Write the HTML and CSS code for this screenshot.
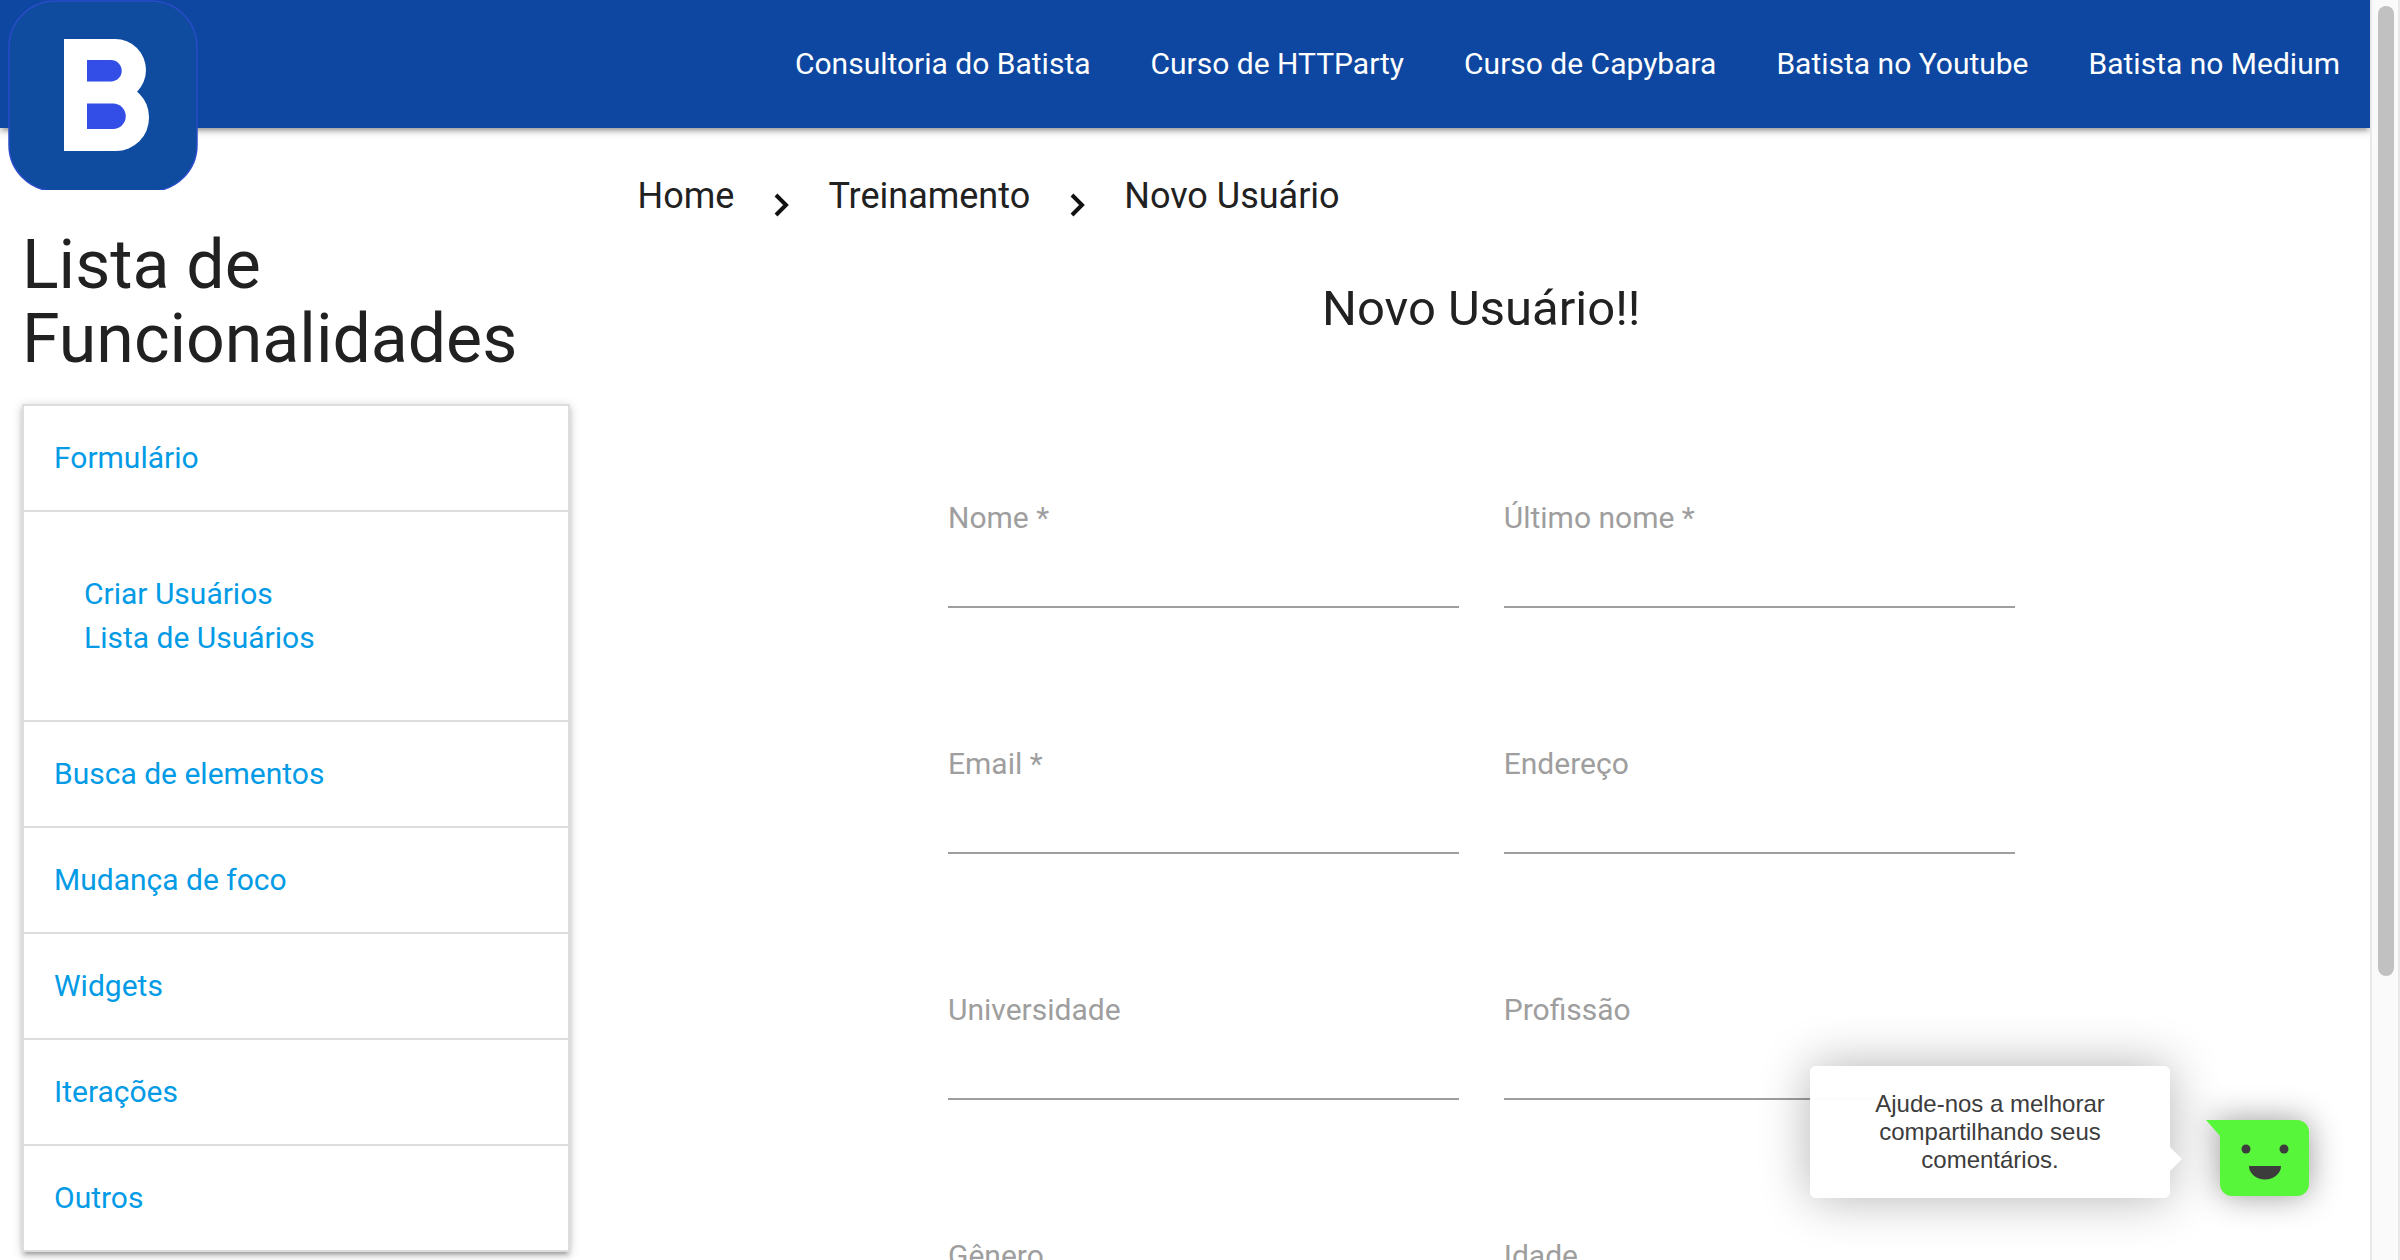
FILE: index.html
```html
<!DOCTYPE html>
<html lang="pt-BR">
<head>
<meta charset="utf-8">
<title>Novo Usuário</title>
<link rel="stylesheet" href="styles.css">
</head>
<body>
<div class="page">
  <header class="navbar">
    <a class="logo" href="#" aria-label="Página inicial">
      <svg viewBox="0 0 190 190">
        <rect x="1" y="1" width="188" height="190" rx="46" fill="#0f4ca0" stroke="#2a4cc8" stroke-width="1.5"/>
        <g fill="#fff">
          <rect x="56" y="39" width="46" height="112"/>
          <rect x="70" y="39" width="68" height="62" rx="31"/>
          <rect x="70" y="84" width="71" height="67" rx="33"/>
        </g>
        <g fill="#324ee6">
          <path d="M79 60h24a10.700 10.700 0 0 1 0 21.500h-24z"/>
          <path d="M79 103.500h26a12.700 12.700 0 0 1 0 25.500h-26z"/>
        </g>
      </svg>
    </a>
    <nav class="nav-links">
      <a href="#">Consultoria do Batista</a>
      <a href="#">Curso de HTTParty</a>
      <a href="#">Curso de Capybara</a>
      <a href="#">Batista no Youtube</a>
      <a href="#">Batista no Medium</a>
    </nav>
  </header>

  <div class="columns">
    <aside class="sidebar">
      <h1>Lista de Funcionalidades</h1>
      <ul class="menu">
        <li>
          <a class="menu-header" href="#">Formulário</a>
          <div class="menu-body">
            <a href="#">Criar Usuários</a>
            <a href="#">Lista de Usuários</a>
          </div>
        </li>
        <li><a class="menu-header" href="#">Busca de elementos</a></li>
        <li><a class="menu-header" href="#">Mudança de foco</a></li>
        <li><a class="menu-header" href="#">Widgets</a></li>
        <li><a class="menu-header" href="#">Iterações</a></li>
        <li><a class="menu-header" href="#">Outros</a></li>
      </ul>
    </aside>

    <main class="content">
      <nav class="breadcrumbs">
        <a href="#">Home</a>
        <svg class="chevron" viewBox="0 0 16 24"><path d="M3 2l10 10-10 10" fill="none" stroke="#111" stroke-width="4"/></svg>
        <a href="#">Treinamento</a>
        <svg class="chevron" viewBox="0 0 16 24"><path d="M3 2l10 10-10 10" fill="none" stroke="#111" stroke-width="4"/></svg>
        <a href="#">Novo Usuário</a>
      </nav>
      <h2>Novo Usuário!!</h2>
      <form class="user-form">
        <div class="field"><label for="nome">Nome *</label><input id="nome" type="text"></div>
        <div class="field"><label for="ultimo">Último nome *</label><input id="ultimo" type="text"></div>
        <div class="field"><label for="email">Email *</label><input id="email" type="email"></div>
        <div class="field"><label for="endereco">Endereço</label><input id="endereco" type="text"></div>
        <div class="field"><label for="universidade">Universidade</label><input id="universidade" type="text"></div>
        <div class="field"><label for="profissao">Profissão</label><input id="profissao" type="text"></div>
        <div class="field"><label for="genero">Gênero</label><input id="genero" type="text"></div>
        <div class="field"><label for="idade">Idade</label><input id="idade" type="text"></div>
      </form>
    </main>
  </div>

  <div class="feedback">
    <p class="feedback-text">Ajude-nos a melhorar compartilhando seus comentários.</p>
    <button class="feedback-button" type="button" aria-label="Enviar comentários">
      <svg viewBox="0 0 103 76">
        <path d="M0 0H91a12 12 0 0 1 12 12V64a12 12 0 0 1-12 12H26a12 12 0 0 1-12-12V16z" fill="#58f63a"/>
        <g fill="#3c3c3c">
          <circle cx="40" cy="29" r="4.500"/>
          <circle cx="78" cy="29" r="4.500"/>
          <path d="M43 46H75a16 13.500 0 0 1-32 0z"/>
        </g>
      </svg>
    </button>
  </div>
</div>
<div class="scrollbar"><div class="scroll-thumb"></div></div>
</body>
</html>
```
FILE: styles.css
```css
* {
  box-sizing: border-box;
}

body {
  margin: 0;
  height: 100vh;
  display: grid;
  grid-template-columns: minmax(0, 1fr) 30px;
  overflow: hidden;
  background: #fff;
  color: #212121;
  font: 30px/44px Roboto, sans-serif;
}

a {
  color: inherit;
  text-decoration: none;
}

.page {
  position: relative;
  height: 100vh;
  overflow: hidden;
}

.navbar {
  position: relative;
  display: flex;
  justify-content: space-between;
  height: 128px;
  padding: 0 30px 0 8px;
  background: #0d47a1;
  color: #fff;
  box-shadow: 0 4px 4px rgba(0, 0, 0, .14), 0 6px 2px -4px rgba(0, 0, 0, .12), 0 2px 10px rgba(0, 0, 0, .2);
}

.logo,
.logo svg {
  display: block;
  width: 190px;
  height: 190px;
}

.nav-links {
  display: flex;
  gap: 60px;
  line-height: 128px;
}

.columns {
  display: grid;
  grid-template-columns: 1fr 3fr;
}

.sidebar {
  padding: 100px 23px 0 22px;
}

h1,
h2 {
  margin: 0;
  font-weight: 400;
}

h1 {
  font-size: 68px;
  line-height: 74px;
}

.menu {
  list-style: none;
  margin: 28px 0 0;
  padding: 0;
  border: 2px solid #ddd;
  border-bottom: 0;
  color: #039be5;
  box-shadow: 0 4px 4px rgba(0, 0, 0, .14), 0 6px 2px -4px rgba(0, 0, 0, .12), 0 2px 10px rgba(0, 0, 0, .2);
}

.menu-header {
  display: block;
  padding: 30px;
  border-bottom: 2px solid #ddd;
}

.menu-body {
  display: flex;
  flex-direction: column;
  padding: 60px;
  border-bottom: 2px solid #ddd;
}

.breadcrumbs {
  display: flex;
  align-items: center;
  gap: 39px;
  padding: 46px 45px 0;
  font-size: 36px;
}

.chevron {
  width: 16px;
  height: 24px;
  margin-top: 18px;
}

h2 {
  margin-top: 64px;
  font-size: 49px;
  line-height: 54px;
  text-align: center;
}

.user-form {
  display: grid;
  grid-template-columns: 1fr 1fr;
  gap: 134px 45px;
  width: 60%;
  margin: 160px auto 0;
}

.field {
  display: flex;
  flex-direction: column;
  color: #9e9e9e;
}

.field input {
  width: 100%;
  height: 68px;
  padding: 0;
  border: 0;
  border-bottom: 2px solid #9e9e9e;
  background: transparent;
  font: inherit;
  outline: none;
}

.feedback {
  position: absolute;
  right: 61px;
  bottom: 62px;
  display: flex;
  gap: 36px;
}

.feedback-text {
  position: relative;
  width: 360px;
  height: 132px;
  margin: 0;
  padding: 24px 50px;
  border-radius: 6px;
  background: rgba(255, 255, 255, .97);
  box-shadow: 0 0 50px rgba(0, 0, 0, .3);
  color: #3c3c3c;
  font: 24px/28px "Liberation Sans", Arial, sans-serif;
  text-align: center;
}

.feedback-text::after {
  content: "";
  position: absolute;
  left: 100%;
  bottom: 27px;
  border: 12px solid transparent;
  border-left-color: #fff;
  border-right: 0;
}

.feedback-button {
  align-self: flex-end;
  margin-bottom: 2px;
  padding: 0;
  border: 0;
  background: none;
}

.feedback-button svg {
  display: block;
  width: 103px;
  height: 76px;
  overflow: visible;
  filter: drop-shadow(0 0 16px rgba(0, 0, 0, .4));
}

.scrollbar {
  padding: 6px 4px 6px 6px;
  border: solid #e8e8e8;
  border-width: 0 2px;
  background: #fafafa;
}

.scroll-thumb {
  width: 16px;
  height: 77vh;
  border-radius: 8px;
  background: #c1c1c1;
}
```
